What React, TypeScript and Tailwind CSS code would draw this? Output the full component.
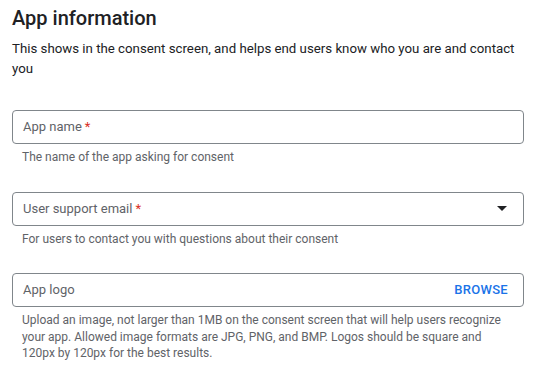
import React from "react"

type FieldProps = {
  label: string
  required?: boolean
  helper: string
  trailing?: React.ReactNode
}

function Field({ label, required, helper, trailing }: FieldProps) {
  return (
    <div className="w-[512px]">
      <div className="flex h-[34px] items-center justify-between rounded-[4px] border border-[#80868b] pl-[10px] pr-[15px]">
        <span className="text-[13px] text-[#5f6368]">
          {label}
          {required && <span className="ml-[3px] text-[#d93025]">*</span>}
        </span>
        {trailing}
      </div>
      <p className="mt-[5px] pl-[10px] pr-[16px] text-[12px] leading-[16.5px] text-[#5f6368]">{helper}</p>
    </div>
  )
}

export default function App() {
  return (
    <div className="h-[382px] w-[545px] bg-white px-3 pt-[6px] font-['Roboto',sans-serif]">
      <h1 className="text-[20px] font-medium leading-6 text-[#202124]">App information</h1>
      <p className="mt-[9px] w-[512px] text-[13.25px] leading-5 text-[#202124]">
        This shows in the consent screen, and helps end users know who you are and contact you
      </p>
      <div className="mt-[31px] flex flex-col gap-[26px]">
        <Field label="App name" required helper="The name of the app asking for consent" />
        <Field
          label="User support email"
          required
          helper="For users to contact you with questions about their consent"
          trailing={
            <svg width="10" height="5" viewBox="0 0 10 5" className="mr-px">
              <path d="M0 0h10L5 5z" fill="#202124" />
            </svg>
          }
        />
        <Field
          label="App logo"
          helper="Upload an image, not larger than 1MB on the consent screen that will help users recognize your app. Allowed image formats are JPG, PNG, and BMP. Logos should be square and 120px by 120px for the best results."
          trailing={<span className="text-[13px] font-medium tracking-[0.3px] text-[#1a73e8]">BROWSE</span>}
        />
      </div>
    </div>
  )
}
